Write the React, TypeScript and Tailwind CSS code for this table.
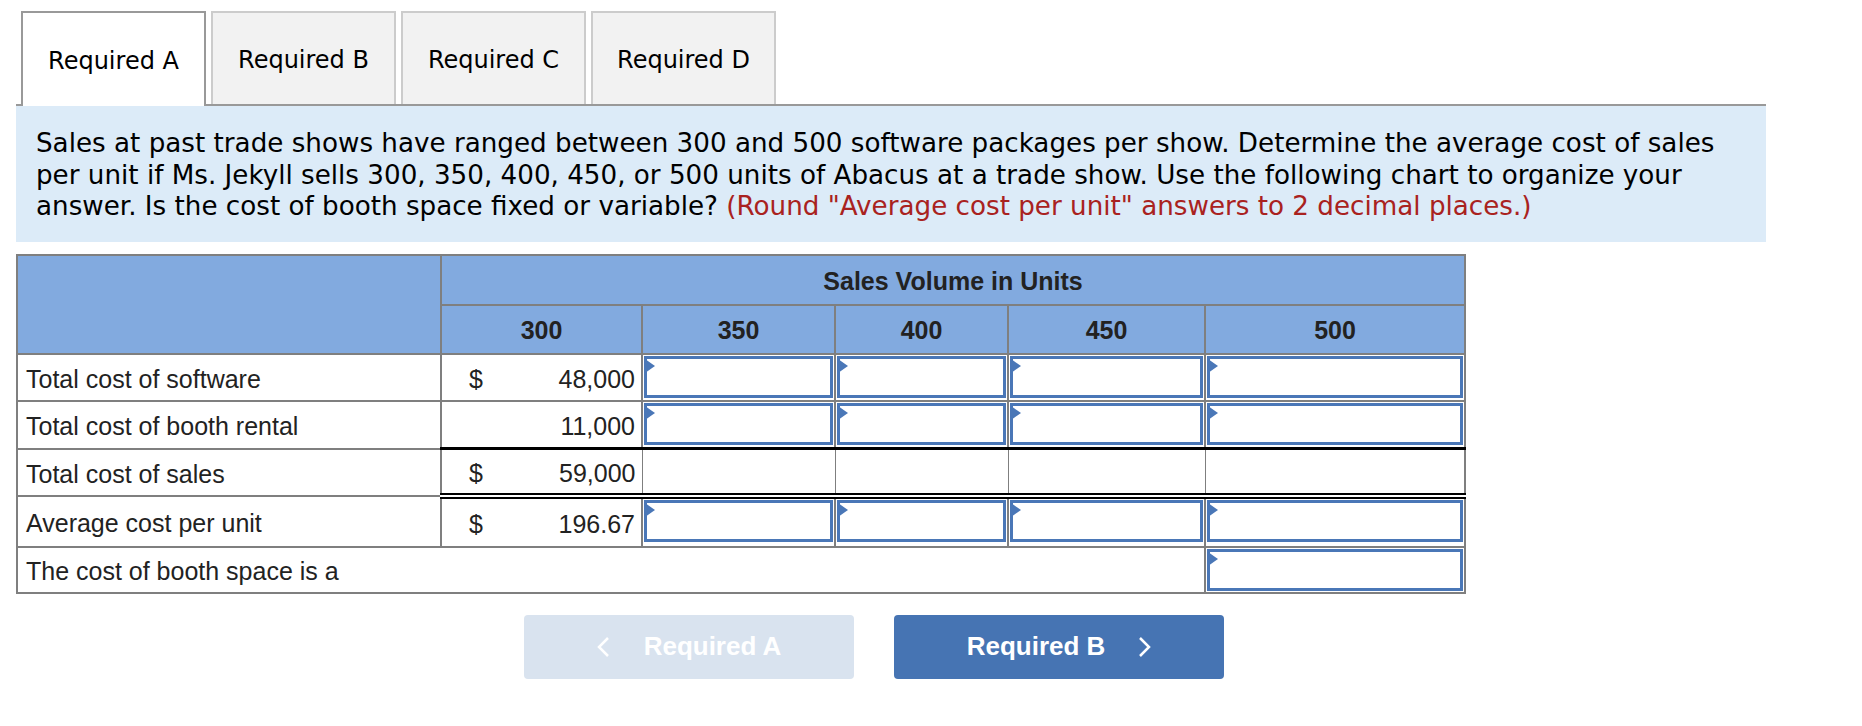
import React from "react";

const tabs = ["Required A", "Required B", "Required C", "Required D"];

function Flag() {
    return (
        <svg width="10" height="14" viewBox="0 0 10 14" className="absolute -left-[2px] top-0">
            <polygon points="0,0 10,7 0,14" fill="#4a77b7" />
        </svg>
    );
}

function InputCell() {
    return (
        <td className="border-2 border-[#7f7f7f] p-px align-top">
            <div className="relative h-full min-h-[42px] w-full border-[3px] border-[#4a77b7] bg-white">
                <Flag />
            </div>
        </td>
    );
}

function Chevron({ dir }: { dir: "left" | "right" }) {
    return (
        <svg width="13" height="22" viewBox="0 0 13 22">
            <polyline
                points={dir === "left" ? "11,2 2,11 11,20" : "2,2 11,11 2,20"}
                fill="none"
                stroke="white"
                strokeWidth="2.5"
            />
        </svg>
    );
}

// row 3 sits between a solid black rule and a double black rule
const totalCell =
    "border-x border-t-[3px] border-b-[6px] [border-bottom-style:double] border-x-[#7f7f7f] border-t-black border-b-black";

export default function App() {
    return (
        <div className="min-h-[726px] w-[1862px] bg-white pt-[11px]">
            <div className="ml-[16px] w-[1750px]">
                {/* tabs */}
                <div className="flex items-end gap-[5px] border-b-2 border-[#999] pl-[5px] font-['DejaVu_Sans',sans-serif] text-[24px] text-black">
                    {tabs.map((t, i) =>
                        i === 0 ? (
                            <div key={t} className="-mb-[2px] flex h-[95px] w-[185px] items-center justify-center border-2 border-b-0 border-[#999] bg-white pt-[2px]">
                                {t}
                            </div>
                        ) : (
                            <div key={t} className="flex h-[93px] w-[185px] items-center justify-center border-2 border-b-0 border-[#cccccc] bg-[#f2f2f2] pt-[3px]">
                                {t}
                            </div>
                        )
                    )}
                </div>

                {/* question */}
                <div className="bg-[#dcebf8] px-[20px] pt-[22px] pb-[19px] font-['DejaVu_Sans',sans-serif] text-[26.2px] leading-[31.5px] text-black">
                    Sales at past trade shows have ranged between 300 and 500 software packages per show. Determine the average cost of sales
                    <br />
                    per unit if Ms. Jekyll sells 300, 350, 400, 450, or 500 units of Abacus at a trade show. Use the following chart to organize your
                    <br />
                    answer. Is the cost of booth space fixed or variable?{" "}
                    <span className="text-[#a92220]">(Round "Average cost per unit" answers to 2 decimal places.)</span>
                </div>
            </div>

            {/* table */}
            <table className="mt-[12px] ml-[16px] w-[1448px] table-fixed border-collapse border-2 border-[#7f7f7f] font-['Liberation_Sans',Arial,sans-serif] text-[25px] text-[#222]">
                <colgroup>
                    <col className="w-[424px]" />
                    <col className="w-[201px]" />
                    <col className="w-[193px]" />
                    <col className="w-[173px]" />
                    <col className="w-[197px]" />
                    <col className="w-[260px]" />
                </colgroup>
                <thead className="bg-[#82aadf] font-bold">
                    <tr className="h-[50px]">
                        <th rowSpan={2} className="border-2 border-[#7f7f7f]"></th>
                        <th colSpan={5} className="border-2 border-[#7f7f7f] pt-[4px] text-center font-bold">
                            Sales Volume in Units
                        </th>
                    </tr>
                    <tr className="h-[49px]">
                        <th className="border-2 border-[#7f7f7f] pt-[4px] text-center">300</th>
                        <th className="border-2 border-[#7f7f7f] pt-[4px] text-center">350</th>
                        <th className="border-2 border-[#7f7f7f] pt-[4px] text-center">400</th>
                        <th className="border-2 border-[#7f7f7f] pt-[4px] text-center">450</th>
                        <th className="border-2 border-[#7f7f7f] pt-[4px] text-center">500</th>
                    </tr>
                </thead>
                <tbody>
                    <tr className="h-[47px]">
                        <td className="border-2 border-[#7f7f7f] pt-[5px] pl-[8px]">Total cost of software</td>
                        <td className="border-2 border-[#7f7f7f] pt-[5px] pr-[6px] pl-[27px]">
                            <div className="flex justify-between">
                                <span>$</span>
                                <span>48,000</span>
                            </div>
                        </td>
                        <InputCell />
                        <InputCell />
                        <InputCell />
                        <InputCell />
                    </tr>
                    <tr className="h-[48px]">
                        <td className="border-2 border-[#7f7f7f] pt-[5px] pl-[8px]">Total cost of booth rental</td>
                        <td className="border-2 border-[#7f7f7f] pt-[5px] pr-[6px] text-right">11,000</td>
                        <InputCell />
                        <InputCell />
                        <InputCell />
                        <InputCell />
                    </tr>
                    <tr className="h-[44px]">
                        <td className="border-2 border-[#7f7f7f] pt-[5px] pl-[8px]">Total cost of sales</td>
                        <td className={`${totalCell} border-l-2 pt-[5px] pr-[6px] pl-[27px]`}>
                            <div className="flex justify-between">
                                <span>$</span>
                                <span>59,000</span>
                            </div>
                        </td>
                        <td className={totalCell}></td>
                        <td className={totalCell}></td>
                        <td className={totalCell}></td>
                        <td className={`${totalCell} border-r-2`}></td>
                    </tr>
                    <tr className="h-[51px]">
                        <td className="border-2 border-[#7f7f7f] pt-[5px] pl-[8px]">Average cost per unit</td>
                        <td className="border-2 border-[#7f7f7f] pt-[5px] pr-[6px] pl-[27px]">
                            <div className="flex justify-between">
                                <span>$</span>
                                <span>196.67</span>
                            </div>
                        </td>
                        <InputCell />
                        <InputCell />
                        <InputCell />
                        <InputCell />
                    </tr>
                    <tr className="h-[46px]">
                        <td colSpan={5} className="border-2 border-[#7f7f7f] pt-[5px] pl-[8px]">The cost of booth space is a</td>
                        <InputCell />
                    </tr>
                </tbody>
            </table>

            {/* nav buttons */}
            <div className="mt-[21px] ml-[524px] flex gap-[40px] font-['Liberation_Sans',Arial,sans-serif] text-[26px] font-bold text-white">
                <button className="flex h-[64px] w-[330px] items-center justify-center gap-[34px] rounded-[4px] bg-[#d9e3ef]">
                    <Chevron dir="left" />
                    <span>Required A</span>
                </button>
                <button className="flex h-[64px] w-[330px] items-center justify-center gap-[33px] rounded-[4px] bg-[#4674b3]">
                    <span>Required B</span>
                    <Chevron dir="right" />
                </button>
            </div>
        </div>
    );
}
